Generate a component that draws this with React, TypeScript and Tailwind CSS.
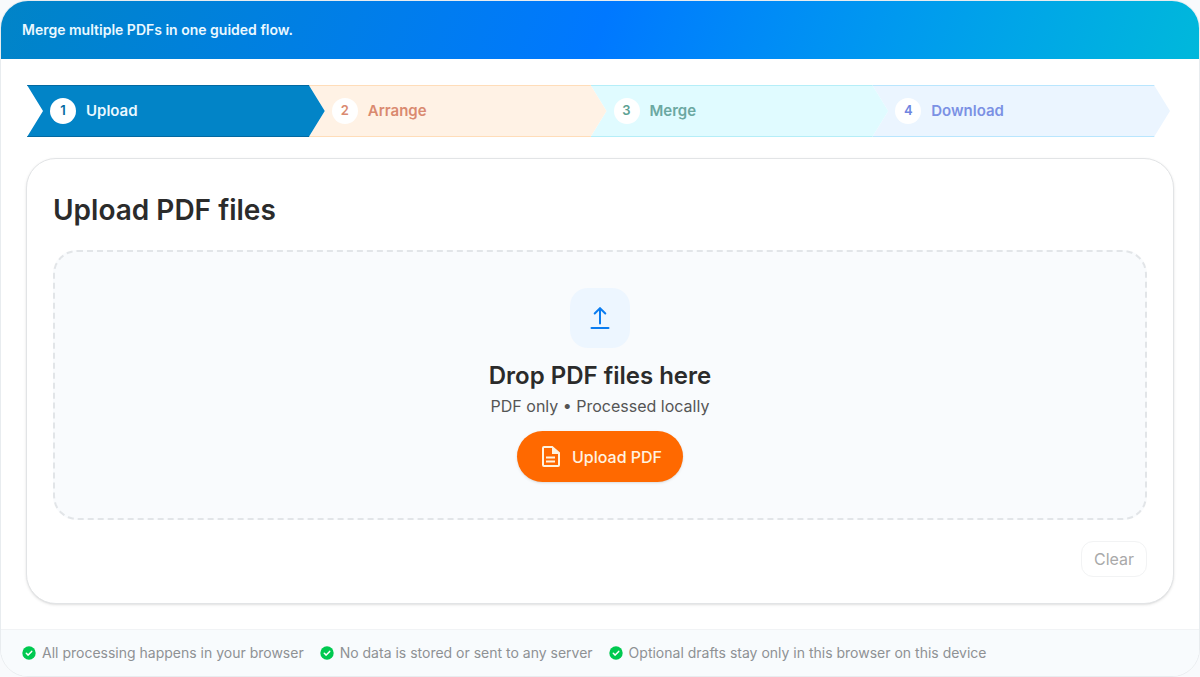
import { clsx } from "clsx"

const steps = [
  { label: "Upload", color: "border-[#0369a1] bg-[#0284c7] text-[#eaf8ff]", badge: "text-[#0369a1]" },
  { label: "Arrange", color: "border-[#ffddb9] bg-[#fff2e5] text-[#da8a70]", badge: "text-[#da8a70]" },
  { label: "Merge", color: "border-[#b5eef8] bg-[#e0fbff] text-[#6ba8a1]", badge: "text-[#5ba092]" },
  { label: "Download", color: "border-[#b9e6fe] bg-[#ebf5ff] text-[#7b91e4]", badge: "text-[#6f85e0]" },
]

const notes = [
  "All processing happens in your browser",
  "No data is stored or sent to any server",
  "Optional drafts stay only in this browser on this device",
]

function UploadIcon() {
  return (
    <svg width="24" height="24" viewBox="0 0 24 24" fill="none" stroke="#0a7cf0" strokeWidth="2" strokeLinecap="round" strokeLinejoin="round" aria-hidden="true">
      <path d="M12 17.5V2.500" />
      <path d="M6.700 7.500L12 2.200l5.300 5.300" />
      <path d="M3.500 22h17" />
    </svg>
  )
}

function FileIcon() {
  return (
    <svg width="24" height="24" viewBox="0 0 24 24" fill="#fff3e0" aria-hidden="true">
      <path fillRule="evenodd" d="M6 1h8.500L22 7.500V20a2 2 0 0 1-2 2H6a2 2 0 0 1-2-2V3a2 2 0 0 1 2-2zM6 3v17h14V9h-6V3z" />
      <path d="M8 11.500h9v2H8zM8 15.500h9v2H8z" />
    </svg>
  )
}

function CheckIcon() {
  return (
    <svg width="14" height="14" viewBox="0 0 14 14" fill="none" aria-hidden="true">
      <circle cx="7" cy="7" r="6.700" fill="#00c950" />
      <path d="M4.300 7.300l1.900 1.800 3.500-3.700" stroke="#fff" strokeWidth="1.500" strokeLinecap="round" strokeLinejoin="round" />
    </svg>
  )
}

function Stepper() {
  return (
    <ol className="flex pr-1 pl-px">
      {steps.map((step, i) => (
        <li
          key={step.label}
          className={clsx(
            "relative flex h-[52px] flex-1 items-center gap-[10px] border-y pl-[23px] [clip-path:polygon(0_0,calc(100%-16px)_0,100%_50%,calc(100%-16px)_100%,0_100%,16px_50%)]",
            i > 0 && "-ml-4",
            i === 0 && "z-30",
            i === 1 && "z-20",
            i === 2 && "z-10",
            step.color,
          )}
        >
          <span className={clsx("flex size-[26px] items-center justify-center rounded-full bg-white text-[13px] font-semibold", step.badge)}>
            {i + 1}
          </span>
          <span className="text-[15px] font-semibold">{step.label}</span>
        </li>
      ))}
    </ol>
  )
}

export default function App() {
  return (
    <div className="min-h-screen bg-[#f8fafc] font-[Inter,sans-serif]">
      <main className="overflow-hidden rounded-[28px] border border-[#e8ecef] bg-white">
        <header className="bg-linear-110 from-[#0284c7] via-[#0078ff] to-[#00b8db] px-[21px] py-[19px]">
          <p className="text-sm leading-5 font-semibold text-[#eaf8ff]">Merge multiple PDFs in one guided flow.</p>
        </header>

        <div className="px-[25px] pt-[26px] pb-[25px]">
          <Stepper />

          <section className="mt-[21px] rounded-[30px] border border-[#e2e4e6] bg-white px-[26px] pt-[31px] pb-[26px] shadow-sm">
            <h1 className="text-[28px] leading-10 font-semibold text-[#2b2b2b]">Upload PDF files</h1>

            <div className="mt-5 flex flex-col items-center rounded-3xl border-2 border-dashed border-[#e2e5e8] bg-[#f9fbfd] py-9">
              <span className="flex size-[60px] items-center justify-center rounded-[18px] bg-[#edf6ff]">
                <UploadIcon />
              </span>
              <h2 className="mt-3 text-2xl leading-8 font-semibold text-[#2b2b2b]">Drop PDF files here</h2>
              <p className="mt-[2px] text-base leading-6 text-[#555]">PDF only • Processed locally</p>
              <button type="button" className="mt-[13px] flex h-[51px] items-center gap-[10px] rounded-full bg-[#ff6900] px-[21px] text-base font-medium text-[#fff3e0] shadow-sm">
                <FileIcon />
                Upload PDF
              </button>
            </div>

            <div className="mt-[21px] flex justify-end">
              <button type="button" className="h-9 rounded-xl border border-[#f2f3f4] px-3 text-base text-[#a9a9a9]">
                Clear
              </button>
            </div>
          </section>
        </div>

        <footer className="flex flex-wrap gap-x-4 gap-y-2 border-t border-[#f1f3f5] bg-[#f8fbfd] px-[21px] py-[13px] text-sm leading-5 text-[#8e9194]">
          {notes.map((note) => (
            <p key={note} className="flex items-center gap-[6px]">
              <CheckIcon />
              {note}
            </p>
          ))}
        </footer>
      </main>
    </div>
  )
}
